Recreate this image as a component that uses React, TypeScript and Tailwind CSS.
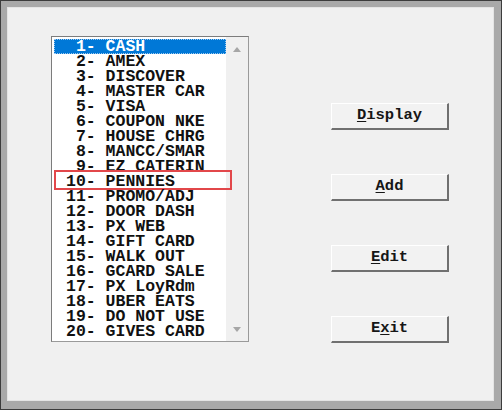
import React from 'react';

const tenders: string[] = [
  'CASH',
  'AMEX',
  'DISCOVER',
  'MASTER CAR',
  'VISA',
  'COUPON NKE',
  'HOUSE CHRG',
  'MANCC/SMAR',
  'EZ CATERIN',
  'PENNIES',
  'PROMO/ADJ',
  'DOOR DASH',
  'PX WEB',
  'GIFT CARD',
  'WALK OUT',
  'GCARD SALE',
  'PX LoyRdm',
  'UBER EATS',
  'DO NOT USE',
  'GIVES CARD',
];

const buttons = [
  { key: 'D', rest: 'isplay', before: '' },
  { key: 'A', rest: 'dd', before: '' },
  { key: 'E', rest: 'dit', before: '' },
  { key: 'x', rest: 'it', before: 'E' },
];

const mono = { fontFamily: '"Liberation Mono", "DejaVu Sans Mono", monospace' };

const TenderList: React.FC = () => (
  <div className="flex w-[198px] h-[306px] border border-[#7c7c7c] border-r-[#9a9a9a] border-b-[#9a9a9a] bg-white">
    <div className="flex-1 pt-[2px] pl-[2px]">
      {tenders.map((name, i) => {
        const selected = i === 0;
        const marked = i === 9;
        return (
          <div
            key={i}
            className={`relative h-[15px] pl-[12px] flex items-center whitespace-pre font-bold text-[16.5px] leading-[15px] ${
              selected
                ? 'bg-[#0078d7] text-white outline outline-1 outline-dotted outline-[#9cc9ef] -outline-offset-1'
                : 'text-[#111]'
            }`}
            style={mono}
          >
            {`${String(i + 1).padStart(2, ' ')}- ${name}`}
            {marked && (
              <div className="absolute left-0 top-[-4px] w-[178px] h-[20px] border-2 border-[#e2474a]" />
            )}
          </div>
        );
      })}
    </div>
    <div className="w-[22px] bg-[#f0f0f0] flex flex-col items-center justify-between pt-[10px] pb-[9px]">
      <div className="w-0 h-0 border-l-[4.5px] border-r-[4.5px] border-b-[5px] border-l-transparent border-r-transparent border-b-[#a6a6a6]" />
      <div className="w-0 h-0 border-l-[4.5px] border-r-[4.5px] border-t-[5px] border-l-transparent border-r-transparent border-t-[#a6a6a6]" />
    </div>
  </div>
);

export default function App() {
  return (
    <div className="w-[502px] h-[410px] border border-[#3c3c3c] bg-[#a9a9a9] pt-[6px] pl-[6px] pr-[7px] pb-[8px]">
      <div className="w-full h-full bg-[#f0f0f0] border border-[#e4e4e4] flex pl-[43px] pt-[28px]">
        <TenderList />
        <div className="ml-[82px] pt-[67px] flex flex-col gap-[44px]">
          {buttons.map((b, i) => (
            <button
              key={i}
              className="w-[118px] h-[27px] bg-[#f2f2f2] border-t border-l border-t-white border-l-white border-r-2 border-b-2 border-r-[#707070] border-b-[#707070] flex items-center justify-center font-bold text-[15.5px] text-[#161616]"
              style={mono}
            >
              {b.before}
              <span className="underline underline-offset-2">{b.key}</span>
              {b.rest}
            </button>
          ))}
        </div>
      </div>
    </div>
  );
}
